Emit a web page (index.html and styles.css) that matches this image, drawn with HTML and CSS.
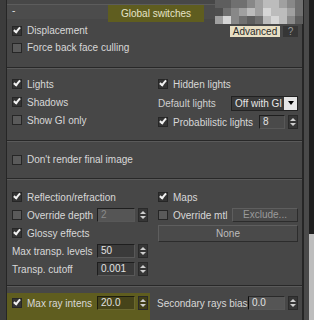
FILE: index.html
```html
<!DOCTYPE html>
<html lang="en">
<head>
  <meta charset="UTF-8" />
  <title>Global switches</title>
  <link rel="stylesheet" href="styles.css">
</head>
<body>
<div class="screen">
  <div class="gutter"></div>

  <div class="panel">
    <!-- Rollout header -->
    <div class="head">
      <span class="minus">-</span>
      <span class="title">Global switches</span>
      <span></span>
    </div>

    <!-- Geometry -->
    <section class="group g1">
      <div class="row">
        <label class="chk"><i class="box on"></i>Displacement</label>
        <div class="tools"><span class="tip">Advanced</span><span class="help">?</span></div>
      </div>
      <div class="row">
        <label class="chk"><i class="box"></i>Force back face culling</label>
      </div>
    </section>
    <div class="sep"></div>

    <!-- Lighting -->
    <section class="group g2">
      <div class="col">
        <div class="row"><label class="chk"><i class="box on"></i>Lights</label></div>
        <div class="row"><label class="chk"><i class="box on"></i>Shadows</label></div>
        <div class="row"><label class="chk"><i class="box"></i>Show GI only</label></div>
      </div>
      <div class="col right">
        <div class="row"><label class="chk"><i class="box on"></i>Hidden lights</label></div>
        <div class="row tall">
          <span class="dim">Default lights</span>
          <div class="select"><span>Off with GI</span><b class="caret"><i></i></b></div>
        </div>
        <div class="row">
          <label class="chk"><i class="box on"></i>Probabilistic lights</label>
          <div class="spin push">
            <span class="field small">8</span>
            <span class="arrows"><i class="up"></i><i class="dn"></i></span>
          </div>
        </div>
      </div>
    </section>
    <div class="sep"></div>

    <!-- Final image -->
    <section class="group g3">
      <div class="row"><label class="chk"><i class="box"></i>Don't render final image</label></div>
    </section>
    <div class="sep"></div>

    <!-- Materials -->
    <section class="group g4">
      <div class="col">
        <div class="row"><label class="chk"><i class="box on"></i>Reflection/refraction</label></div>
        <div class="row">
          <label class="chk lbl"><i class="box"></i>Override depth</label>
          <div class="spin">
            <span class="field off">2</span>
            <span class="arrows"><i class="up"></i><i class="dn"></i></span>
          </div>
        </div>
        <div class="row"><label class="chk"><i class="box on"></i>Glossy effects</label></div>
        <div class="row">
          <span class="lbl">Max transp. levels</span>
          <div class="spin">
            <span class="field">50</span>
            <span class="arrows"><i class="up"></i><i class="dn"></i></span>
          </div>
        </div>
        <div class="row">
          <span class="lbl">Transp. cutoff</span>
          <div class="spin">
            <span class="field">0.001</span>
            <span class="arrows"><i class="up"></i><i class="dn"></i></span>
          </div>
        </div>
      </div>
      <div class="col right">
        <div class="row"><label class="chk"><i class="box on"></i>Maps</label></div>
        <div class="row">
          <label class="chk"><i class="box"></i>Override mtl</label>
          <span class="btn exclude">Exclude...</span>
        </div>
        <span class="btn none">None</span>
      </div>
    </section>
    <div class="sep"></div>

    <!-- Raytracing -->
    <section class="g5">
      <div class="hl">
        <div class="row">
          <label class="chk lbl"><i class="box on"></i>Max ray intens</label>
          <div class="spin">
            <span class="field">20.0</span>
            <span class="arrows"><i class="up"></i><i class="dn"></i></span>
          </div>
        </div>
      </div>
      <div class="rays">
        <div class="row">
          <span>Secondary rays bias</span>
          <div class="spin push">
            <span class="field bias">0.0</span>
            <span class="arrows"><i class="up"></i><i class="dn"></i></span>
          </div>
        </div>
      </div>
    </section>
  </div>

  <div class="scroll"><div class="track"><div class="thumb"></div></div></div>

  <!-- pixelated corner -->
  <div class="mosaic">
    <i class="s2"></i><i class="s2"></i><i class="s3"></i><i class="s3"></i><i class="s4"></i><i class="s5"></i><i class="s6"></i><i class="s6"></i><i class="s5"></i><i class="s4"></i><i class="s3"></i>
    <i class="s1"></i><i class="s3"></i><i class="s4"></i><i class="s5"></i><i class="s6"></i><i class="s5"></i><i class="s7"></i><i class="s6"></i><i class="s6"></i><i class="s5"></i><i class="s3"></i>
    <i class="s5"></i><i class="s7"></i><i class="s4"></i><i class="s3"></i><i class="s2"></i><i class="s3"></i><i class="s6"></i><i class="s7"></i><i class="s6"></i><i class="s4"></i><i class="s2"></i>
  </div>
</div>
</body>
</html>
```

FILE: styles.css
```css
body {
  margin: 0;
  background: #3f3f3f;
  font-family: "Liberation Sans", Arial, sans-serif;
  font-size: 10px;
  color: #d8d8d8;
}

.screen {
  position: relative;
  display: flex;
  width: 314px;
  height: 320px;
  overflow: hidden;
}

.gutter {
  width: 6px;
  background: #3c3c3c;
}

.panel {
  width: 298px;
  box-sizing: border-box;
  border-left: 1px solid #262626;
  border-right: 2px solid #262626;
  background: #474747;
  display: flex;
  flex-direction: column;
}

/* header */
.head {
  margin-top: 4px;
  height: 15px;
  box-sizing: border-box;
  border-top: 1px solid #5c5c5c;
  background: #4c4c4c;
  display: grid;
  grid-template-columns: 1fr auto 1fr;
  align-items: start;
}

.minus {
  padding-left: 5px;
  line-height: 12px;
  color: #e0e0e0;
}

.title {
  height: 17px;
  line-height: 17px;
  padding: 0 13px;
  margin-left: 3px;
  background: #5f5d1f;
  color: #e6e4c8;
}

/* groups */
.group {
  padding: 0 4px 0 5px;
}

.g1 {
  padding-top: 3px;
  padding-bottom: 11px;
}

.g1 .row,
.g3 .row {
  height: 17px;
}

.g2,
.g4 {
  display: grid;
  grid-template-columns: 145px 1fr;
  align-items: start;
}

.g2 {
  padding-top: 6px;
  padding-bottom: 9px;
}

.g3 {
  padding-top: 9px;
  padding-bottom: 10px;
}

.g4 {
  padding-top: 8px;
  padding-bottom: 7px;
}

.col {
  display: flex;
  flex-direction: column;
}

.right {
  padding-left: 1px;
}

.sep {
  height: 2px;
  box-sizing: border-box;
  border-top: 1px solid #282828;
  border-bottom: 1px solid #5a5a5a;
}

.row {
  display: flex;
  align-items: center;
  height: 18px;
  white-space: nowrap;
}

.row.tall {
  height: 20px;
}

.chk {
  display: flex;
  align-items: center;
  gap: 5px;
  flex: none;
}

.lbl {
  width: 85px;
  flex: none;
}

.dim {
  color: #cfcfcf;
}

.push {
  margin-left: auto;
}

/* checkbox */
.box {
  position: relative;
  width: 10px;
  height: 10px;
  box-sizing: border-box;
  border: 1px solid #262626;
  background: #5a5a5a;
  flex: none;
}

.box.on {
  background: #343434;
}

.box.on::after {
  content: "";
  position: absolute;
  left: 2px;
  top: -1px;
  width: 2px;
  height: 5px;
  border: solid #f2f2f2;
  border-width: 0 2px 2px 0;
  transform: rotate(40deg);
}

/* tooltip buttons */
.tools {
  margin-left: auto;
  align-self: flex-start;
  margin-top: 4px;
  display: flex;
  gap: 3px;
}

.tip {
  width: 50px;
  height: 11px;
  line-height: 11px;
  text-align: center;
  background: #e8dfc4;
  color: #2a2a2a;
}

.help {
  width: 15px;
  height: 11px;
  line-height: 11px;
  text-align: center;
  background: #363636;
  color: #9a9a9a;
}

/* spinners */
.spin {
  display: flex;
  align-items: center;
  gap: 3px;
}

.field {
  width: 38px;
  height: 14px;
  box-sizing: border-box;
  border: 1px solid;
  border-color: #1e1e1e #585858 #585858 #1e1e1e;
  background: #3a3a3a;
  padding-left: 3px;
  line-height: 12px;
  color: #e2e2e2;
}

.field.small {
  width: 26px;
  background: #4a4a4a;
}

.field.off {
  background: #555;
  color: #8a8a8a;
}

.field.bias {
  width: 37px;
  background: #555;
  border-left-color: #0e0e0e;
  border-top-color: #2a2a2a;
}

.arrows {
  width: 10px;
  height: 14px;
  box-sizing: border-box;
  border: 1px solid #2a2a2a;
  background: #363636;
  display: flex;
  flex-direction: column;
  justify-content: center;
  align-items: center;
  gap: 2px;
}

.arrows i {
  border-left: 3px solid transparent;
  border-right: 3px solid transparent;
}

.arrows .up {
  border-bottom: 3px solid #cfcfcf;
}

.arrows .dn {
  border-top: 3px solid #cfcfcf;
}

/* dropdown */
.select {
  margin-left: auto;
  width: 67px;
  height: 15px;
  box-sizing: border-box;
  border: 1px solid #222;
  background: #3a3a3a;
  display: flex;
  overflow: hidden;
}

.select span {
  padding-left: 3px;
  line-height: 13px;
  color: #e6e6e6;
  overflow: hidden;
  flex: 1;
}

.caret {
  width: 13px;
  background: #e6e6e6;
  display: flex;
  align-items: center;
  justify-content: center;
  flex: none;
}

.caret i {
  border-left: 3px solid transparent;
  border-right: 3px solid transparent;
  border-top: 4px solid #000;
}

/* buttons */
.btn {
  box-sizing: border-box;
  border: 1px solid;
  border-color: #5e5e5e #2c2c2c #2c2c2c #5e5e5e;
  background: #4a4a4a;
  color: #9a9a9a;
  text-align: center;
}

.exclude {
  margin-left: auto;
  width: 66px;
  height: 14px;
  line-height: 12px;
}

.none {
  margin-top: 1px;
  height: 17px;
  line-height: 15px;
  color: #bdbdbd;
}

/* raytracing */
.g5 {
  display: flex;
  padding-top: 6px;
}

.hl {
  width: 143px;
  height: 27px;
  box-sizing: border-box;
  padding: 1px 0 0 5px;
  background: #5f5d1f;
}

.hl .field {
  background: #46441a;
  border-color: #1e1e10 #6a6830 #6a6830 #1e1e10;
}

.hl .arrows {
  background: #403e18;
}

.rays {
  flex: 1;
  margin-left: 7px;
  padding: 1px 4px 0 0;
}

/* scrollbar */
.scroll {
  width: 10px;
  background: #4a4a4a;
  display: flex;
  justify-content: flex-end;
}

.track {
  width: 5px;
  background: #1e1e1e;
  display: flex;
  flex-direction: column;
  justify-content: flex-end;
}

.thumb {
  height: 86px;
  background: #bdbdbd;
}

/* pixelated area */
.mosaic {
  position: absolute;
  left: 215px;
  top: 0;
  display: grid;
  grid-template-columns: repeat(11, 8px);
  grid-auto-rows: 8px;
}

.s1 { background: #4e4e4e; }
.s2 { background: #5e5e5e; }
.s3 { background: #707070; }
.s4 { background: #888; }
.s5 { background: #a0a0a0; }
.s6 { background: #bcbcbc; }
.s7 { background: #d6d6d6; }
```
